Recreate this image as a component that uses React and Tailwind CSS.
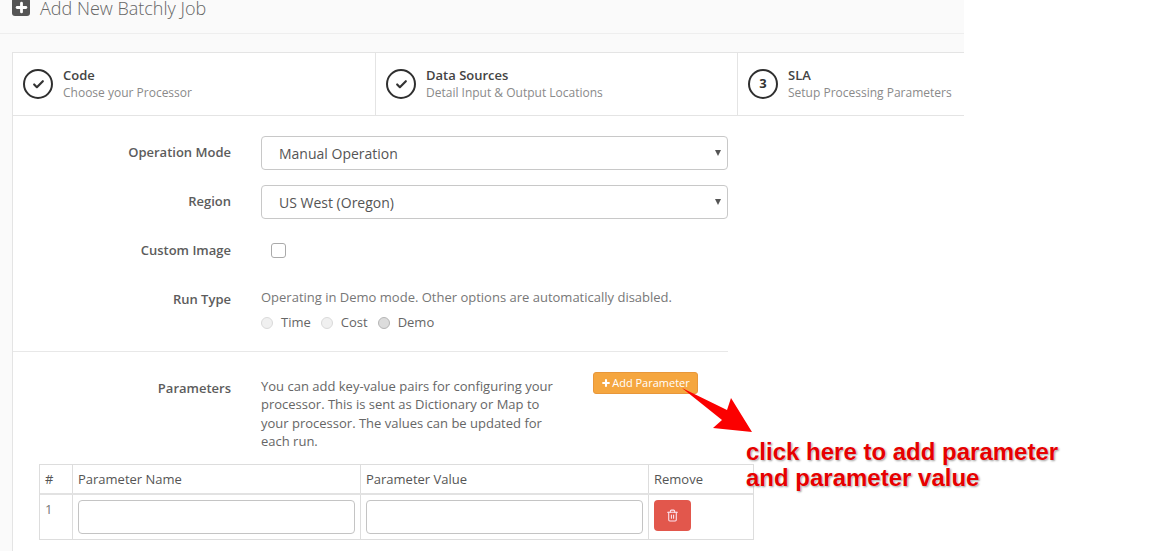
import React from "react";
import { Check, Plus, Trash2 } from "lucide-react";

function Step({ icon, title, sub, className }) {
  return (
    <div className={"flex items-center pl-[10px] h-full " + className}>
      <div className="w-[30px] h-[30px] rounded-full border-2 border-[#2f2f2f] flex items-center justify-center shrink-0 text-[#333] font-bold text-[13px]">
        {icon}
      </div>
      <div className="ml-[10px] -mt-[1px]">
        <div className="text-[13px] leading-[17px] font-semibold text-[#444]">{title}</div>
        <div className="text-[12px] leading-[17px] text-[#8a8a8a]">{sub}</div>
      </div>
    </div>
  );
}

function Label({ children, className = "" }) {
  return (
    <div className={"w-[218px] shrink-0 text-right text-[13px] font-semibold text-[#5c5c5c] " + className}>{children}</div>
  );
}

function Select({ value }) {
  return (
    <div className="w-[467px] h-[34px] border border-[#c8c8c8] rounded-[4px] bg-white flex items-center justify-between pl-[17px] pr-[6px] text-[14px] text-[#555]">
      <span>{value}</span>
      <span className="w-0 h-0 border-x-[3px] border-x-transparent border-t-[6px] border-t-[#555]" />
    </div>
  );
}

function Radio({ label, dark }) {
  return (
    <div className="flex items-center mr-[10px]">
      <span className={"w-[12px] h-[12px] rounded-full border " + (dark ? "bg-[#dcdcdc] border-[#b5b5b5]" : "bg-[#f0f0f0] border-[#dadada]")} />
      <span className="ml-[8px] text-[13px] text-[#666]">{label}</span>
    </div>
  );
}

export default function App() {
  return (
    <div className="relative w-full h-[551px] overflow-hidden bg-white font-['Open_Sans',sans-serif]">
      <div className="w-[964px] h-full bg-[#fafafa]">
        <div className="h-[34px] border-b border-[#eeeeee] pl-[12px] flex items-start">
          <div className="w-[18px] h-[18px] -mt-[2px] rounded-[3px] bg-[#555] flex items-center justify-center shrink-0">
            <Plus size={15} strokeWidth={4.5} className="text-white" />
          </div>
          <div className="ml-[10px] -mt-[4px] text-[18px] leading-[25px] font-light text-[#666]">Add New Batchly Job</div>
        </div>
        <div className="pl-[12px] pt-[18px]">
          <div className="bg-white border-l border-[#e4e4e4] h-[500px]">
            <div className="h-[64px] border-y border-[#e4e4e4] flex">
              <Step className="w-[363px] border-r border-[#e4e4e4]" title="Code" sub="Choose your Processor" icon={<Check size={13} strokeWidth={4} />} />
              <Step className="w-[362px] border-r border-[#e4e4e4]" title="Data Sources" sub="Detail Input & Output Locations" icon={<Check size={13} strokeWidth={4} />} />
              <Step className="flex-1" title="SLA" sub="Setup Processing Parameters" icon="3" />
            </div>
            <div className="w-[715px] pt-[20px]">
              <div className="flex items-center">
                <Label>Operation Mode</Label>
                <div className="ml-[30px]"><Select value="Manual Operation" /></div>
              </div>
              <div className="flex items-center mt-[15px]">
                <Label>Region</Label>
                <div className="ml-[30px]"><Select value="US West (Oregon)" /></div>
              </div>
              <div className="flex items-center mt-[24px] h-[15px]">
                <Label>Custom Image</Label>
                <div className="ml-[40px] w-[15px] h-[15px] rounded-[3px] border border-[#aaaaaa] bg-white" />
              </div>
              <div className="flex mt-[31px]">
                <Label className="leading-[18px] pt-[1px]">Run Type</Label>
                <div className="ml-[30px]">
                  <div className="text-[13px] leading-[16px] text-[#777]">Operating in Demo mode. Other options are automatically disabled.</div>
                  <div className="flex mt-[9px] h-[18px] items-center">
                    <Radio label="Time" />
                    <Radio label="Cost" />
                    <Radio label="Demo" dark />
                  </div>
                </div>
              </div>
              <div className="mt-[19px] border-t border-[#e8e8e8]" />
              <div className="flex pt-[20px]">
                <Label className="leading-[34px] -mt-[1px] h-[34px] pt-0">Parameters</Label>
                <div className="ml-[30px] w-[300px] pt-[5px] text-[13px] leading-[18.4px] text-[#666]">
                  You can add key-value pairs for configuring your processor. This is sent as Dictionary or Map to your processor. The values can be updated for each run.
                </div>
                <div className="ml-[32px] w-[105px] h-[22px] rounded-[3px] bg-[#f5a63f] border border-[#e8973a] text-white text-[11px] flex items-center justify-center whitespace-nowrap">
                  <Plus size={10} strokeWidth={5} className="mr-[1px]" />
                  Add Parameter
                </div>
              </div>
            </div>
            <div className="ml-[26px] mt-[13px] w-[715px] border border-[#dddddd] text-[13px] text-[#555]">
              <div className="flex h-[30px] border-b-2 border-[#e2e2e2] leading-[28px]">
                <div className="w-[33px] pl-[5px] border-r border-[#dddddd]">#</div>
                <div className="w-[288px] pl-[5px] border-r border-[#dddddd]">Parameter Name</div>
                <div className="w-[288px] pl-[5px] border-r border-[#dddddd]">Parameter Value</div>
                <div className="flex-1 pl-[5px]">Remove</div>
              </div>
              <div className="flex h-[44px]">
                <div className="w-[33px] pl-[5px] pt-[5px] border-r border-[#dddddd] text-[#777] leading-[18px]">1</div>
                <div className="w-[288px] pl-[5px] pt-[5px] border-r border-[#dddddd]">
                  <div className="w-[277px] h-[34px] border border-[#c4c4c4] rounded-[4px] bg-white" />
                </div>
                <div className="w-[288px] pl-[5px] pt-[5px] border-r border-[#dddddd]">
                  <div className="w-[277px] h-[34px] border border-[#c4c4c4] rounded-[4px] bg-white" />
                </div>
                <div className="flex-1 pl-[5px] pt-[5px]">
                  <div className="w-[37px] h-[31px] rounded-[4px] bg-[#e2574c] flex items-center justify-center">
                    <Trash2 size={13} className="text-[#fbe3ef]" />
                  </div>
                </div>
              </div>
            </div>
          </div>
        </div>
      </div>
      <svg className="absolute left-[680px] top-[385px]" width="80" height="60" viewBox="0 0 80 60">
        <path d="M2 3 L47 25 L51 13 L72 47 L33 43 L42 35 Z" fill="#fb0000" />
      </svg>
      <div className="absolute left-[746px] top-[439px] font-['Liberation_Sans',sans-serif] font-bold text-[24px] leading-[26px] text-[#e60000] [text-shadow:0_0_2px_#fff,1px_1px_2px_rgba(0,0,0,0.45)] whitespace-nowrap">
        click here to add parameter<br />and parameter value
      </div>
    </div>
  );
}
